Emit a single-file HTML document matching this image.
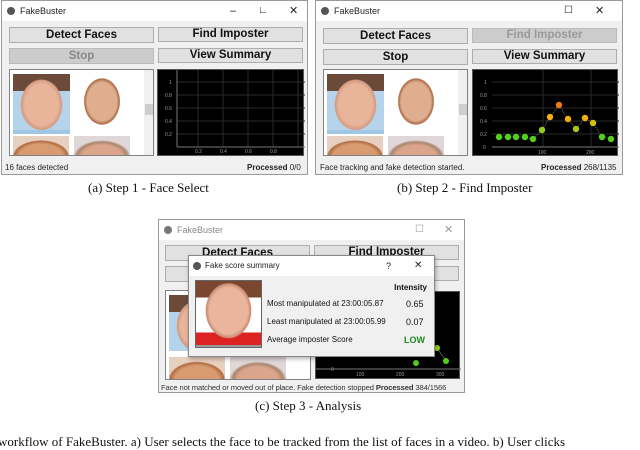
<!DOCTYPE html>
<html><head><meta charset="utf-8">
<style>
*{margin:0;padding:0;box-sizing:border-box}
body{width:640px;height:437px;background:#fff;position:relative;overflow:hidden;font-family:"Liberation Sans",sans-serif}
.a{position:absolute}
.win{position:absolute;background:#f0f0f0;border:1px solid #9a9a9a}
.tb{position:absolute;left:0;right:0;top:0;height:20px;background:#fff;font-size:9px;color:#222;line-height:20px;padding-left:18px}
.btn{position:absolute;background:#e1e1e1;border:1px solid #adadad;font-weight:bold;font-size:11.5px;text-align:center;color:#111}
.list{position:absolute;background:#fff;border:1px solid #828282;overflow:hidden}
.chart{position:absolute;background:#000;border:1px solid #555}
.st{position:absolute;font-size:8px;color:#222;white-space:nowrap}
.cap{position:absolute;font-family:"Liberation Serif",serif;font-size:13px;color:#111;white-space:nowrap}
.f1{background:radial-gradient(ellipse 42% 52% at 50% 55%,#e8b49a 70%,#d49a80 85%,transparent 88%),linear-gradient(#6b4a3a 0 30%,#b5d3ea 30%);}
.f2{background:radial-gradient(ellipse 38% 50% at 50% 50%,#dfae8e 70%,#a86a45 82%,#fff 86%);}
.f3{background:radial-gradient(ellipse 60% 90% at 50% 95%,#d89b70 65%,#b06a40 80%,#e8d0c0 85%);}
.f4{background:radial-gradient(ellipse 60% 90% at 50% 95%,#dba58c 60%,#a8866e 75%,#e0d8d8 85%);}
.sb{position:absolute;width:10px;background:#f0f0f0}
</style></head><body>

<div class="win" style="left:1px;top:0;width:307px;height:175px">
 <div class="tb">FakeBuster<span class="a" style="left:5px;top:6px;width:8px;height:8px;border-radius:50%;background:#555"></span>
  <span class="a" style="left:228px;top:0;font-size:11px">–</span><span class="a" style="left:256px;top:0;font-size:10px">∟</span><span class="a" style="left:287px;top:0;font-size:11px">✕</span></div>
 <div class="btn" style="left:7px;top:26px;width:145px;height:16px;line-height:14px">Detect Faces</div>
 <div class="btn" style="left:156px;top:26px;width:145px;height:15px;line-height:13px">Find Imposter</div>
 <div class="btn" style="left:7px;top:47px;width:145px;height:16px;line-height:14px;background:#cccccc;color:#888;border-color:#bbb">Stop</div>
 <div class="btn" style="left:156px;top:47px;width:145px;height:15px;line-height:13px">View Summary</div>
 <div class="list" style="left:7px;top:68px;width:145px;height:87px">
  <div class="a f1" style="left:3px;top:4px;width:57px;height:56px"></div>
  <div class="a" style="left:3px;top:60px;width:57px;height:4px;background:#9fc6e3"></div>
  <div class="a f2" style="left:64px;top:4px;width:56px;height:55px"></div>
  <div class="a f3" style="left:3px;top:66px;width:56px;height:22px"></div>
  <div class="a f4" style="left:64px;top:66px;width:56px;height:22px"></div>
  <div class="sb" style="left:134px;top:0;height:87px"><div class="a" style="left:1px;top:34px;width:9px;height:11px;background:#cdcdcd"></div></div>
 </div>
 <div class="chart" style="left:155px;top:68px;width:147px;height:87px">
  <svg width="147" height="87" style="position:absolute;left:0;top:0">
   <g stroke="#2a2a2a" stroke-width="1">
    <line x1="19" y1="12" x2="147" y2="12"/><line x1="19" y1="25" x2="147" y2="25"/><line x1="19" y1="38" x2="147" y2="38"/><line x1="19" y1="51" x2="147" y2="51"/><line x1="19" y1="64" x2="147" y2="64"/>
    <line x1="40" y1="0" x2="40" y2="77"/><line x1="65" y1="0" x2="65" y2="77"/><line x1="90" y1="0" x2="90" y2="77"/><line x1="115" y1="0" x2="115" y2="77"/><line x1="140" y1="0" x2="140" y2="77"/>
   </g>
   <line x1="19" y1="77" x2="147" y2="77" stroke="#777"/><line x1="19" y1="0" x2="19" y2="77" stroke="#777"/>
   <g fill="#999" font-size="5" font-family="Liberation Sans">
    <text x="11" y="14">1</text><text x="7" y="27">0.8</text><text x="7" y="40">0.6</text><text x="7" y="53">0.4</text><text x="7" y="66">0.2</text>
    <text x="37" y="83">0.2</text><text x="62" y="83">0.4</text><text x="87" y="83">0.6</text><text x="112" y="83">0.8</text>
   </g>
  </svg>
 </div>
 <div class="st" style="left:3px;top:162px">16 faces detected</div>
 <div class="st" style="left:245px;top:162px"><b>Processed</b> 0/0</div>
</div>
<div class="cap" style="left:88px;top:180px">(a) Step 1 - Face Select</div>

<div class="win" style="left:315px;top:0;width:308px;height:175px">
 <div class="tb">FakeBuster<span class="a" style="left:5px;top:6px;width:8px;height:8px;border-radius:50%;background:#555"></span>
  <span class="a" style="left:248px;top:0;font-size:10px">☐</span><span class="a" style="left:279px;top:0;font-size:11px">✕</span></div>
 <div class="btn" style="left:7px;top:27px;width:145px;height:16px;line-height:14px">Detect Faces</div>
 <div class="btn" style="left:156px;top:27px;width:145px;height:15px;line-height:13px;background:#cccccc;color:#999;border-color:#bbb">Find Imposter</div>
 <div class="btn" style="left:7px;top:48px;width:145px;height:16px;line-height:14px">Stop</div>
 <div class="btn" style="left:156px;top:48px;width:145px;height:15px;line-height:13px">View Summary</div>
 <div class="list" style="left:7px;top:68px;width:145px;height:87px">
  <div class="a f1" style="left:3px;top:4px;width:57px;height:56px"></div>
  <div class="a" style="left:3px;top:60px;width:57px;height:4px;background:#9fc6e3"></div>
  <div class="a f2" style="left:64px;top:4px;width:56px;height:55px"></div>
  <div class="a f3" style="left:3px;top:66px;width:56px;height:22px"></div>
  <div class="a f4" style="left:64px;top:66px;width:56px;height:22px"></div>
  <div class="sb" style="left:134px;top:0;height:87px"><div class="a" style="left:1px;top:34px;width:9px;height:11px;background:#cdcdcd"></div></div>
 </div>
 <div class="chart" style="left:156px;top:68px;width:146px;height:87px">
  <svg width="146" height="87" style="position:absolute;left:0;top:0">
   <g stroke="#2a2a2a"><line x1="19" y1="12" x2="146" y2="12"/><line x1="19" y1="25" x2="146" y2="25"/><line x1="19" y1="38" x2="146" y2="38"/><line x1="19" y1="51" x2="146" y2="51"/><line x1="19" y1="64" x2="146" y2="64"/><line x1="70" y1="0" x2="70" y2="77"/><line x1="118" y1="0" x2="118" y2="77"/></g>
   <line x1="19" y1="77" x2="146" y2="77" stroke="#777"/>
   <g fill="#999" font-size="5"><text x="11" y="14">1</text><text x="7" y="27">0.8</text><text x="7" y="40">0.6</text><text x="7" y="53">0.4</text><text x="7" y="66">0.2</text><text x="10" y="79">0</text><text x="65" y="84">100</text><text x="113" y="84">200</text></g>
   <polyline fill="none" stroke="#888" stroke-width="0.6" stroke-dasharray="1.5,1" points="26,67 35,67 43,67 52,67 60,69 69,60 77,47 86,35 95,49 103,59 112,48 120,53 129,67 138,69"/>
   <g>
    <circle cx="26" cy="67" r="3.2" fill="#55d01a"/><circle cx="35" cy="67" r="3.2" fill="#55d01a"/><circle cx="43" cy="67" r="3.2" fill="#55d01a"/><circle cx="52" cy="67" r="3.2" fill="#55d01a"/><circle cx="60" cy="69" r="3.2" fill="#55d01a"/>
    <circle cx="69" cy="60" r="3.2" fill="#8fd01a"/><circle cx="77" cy="47" r="3.2" fill="#f0b010"/><circle cx="86" cy="35" r="3.2" fill="#f07810"/><circle cx="95" cy="49" r="3.2" fill="#f0b010"/><circle cx="103" cy="59" r="3.2" fill="#a8c818"/><circle cx="112" cy="48" r="3.2" fill="#f0b010"/><circle cx="120" cy="53" r="3.2" fill="#d0c010"/><circle cx="129" cy="67" r="3.2" fill="#55d01a"/><circle cx="138" cy="69" r="3.2" fill="#55d01a"/>
   </g>
  </svg>
 </div>
 <div class="st" style="left:4px;top:162px">Face tracking and fake detection started.</div>
 <div class="st" style="left:225px;top:162px"><b>Processed</b> 268/1135</div>
</div>
<div class="cap" style="left:397px;top:180px">(b) Step 2 - Find Imposter</div>

<div class="win" style="left:158px;top:219px;width:307px;height:174px">
 <div class="tb" style="color:#888">FakeBuster<span class="a" style="left:5px;top:6px;width:8px;height:8px;border-radius:50%;background:#777"></span>
  <span class="a" style="left:256px;top:0;font-size:10px;color:#999">☐</span><span class="a" style="left:285px;top:0;font-size:11px;color:#999">✕</span></div>
 <div class="btn" style="left:6px;top:25px;width:145px;height:16px;line-height:14px">Detect Faces</div>
 <div class="btn" style="left:155px;top:25px;width:145px;height:15px;line-height:13px">Find Imposter</div>
 <div class="btn" style="left:6px;top:46px;width:145px;height:16px"></div>
 <div class="btn" style="left:155px;top:46px;width:145px;height:15px"></div>
 <div class="list" style="left:6px;top:70px;width:146px;height:90px">
  <div class="a f1" style="left:3px;top:4px;width:57px;height:56px"></div>
  <div class="a f2" style="left:64px;top:4px;width:56px;height:55px"></div>
  <div class="a f3" style="left:3px;top:66px;width:56px;height:24px"></div>
  <div class="a f4" style="left:64px;top:66px;width:56px;height:24px"></div>
 </div>
 <div class="chart" style="left:156px;top:71px;width:145px;height:88px">
  <svg width="145" height="88" style="position:absolute;left:0;top:0">
   <line x1="0" y1="77" x2="145" y2="77" stroke="#777"/>
   <g fill="#999" font-size="5"><text x="15" y="79">0</text><text x="40" y="84">100</text><text x="80" y="84">200</text><text x="120" y="84">300</text></g>
   <polyline fill="none" stroke="#888" stroke-width="0.6" points="113,58 121,56 130,69"/>
   <circle cx="113" cy="58" r="3" fill="#8fd01a"/><circle cx="121" cy="56" r="3" fill="#8fd01a"/><circle cx="130" cy="69" r="3" fill="#55d01a"/><circle cx="100" cy="71" r="3" fill="#55d01a"/>
  </svg>
 </div>
 <div class="st" style="left:2px;top:163px;color:#333;font-size:7.6px;letter-spacing:-0.1px">Face not matched or moved out of place. Fake detection stopped <b>Processed</b> 384/1566</div>
</div>
<div class="a" style="left:188px;top:255px;width:247px;height:102px;background:#f0f0f0;border:1px solid #888;box-shadow:1px 2px 4px rgba(0,0,0,.3)">
 <div class="a" style="left:0;top:0;width:245px;height:20px;background:#fff;font-size:8px;line-height:20px;padding-left:16px;color:#222">Fake score summary
  <span class="a" style="left:4px;top:6px;width:8px;height:8px;border-radius:50%;background:#555"></span>
  <span class="a" style="left:197px;top:0;font-size:9px">?</span><span class="a" style="left:225px;top:0;font-size:10px">✕</span></div>
 <div class="a" style="left:6px;top:24px;width:67px;height:68px;border:1px solid #666;background:radial-gradient(ellipse 42% 50% at 50% 45%,#eab59c 70%,#c88a70 82%,transparent 85%),linear-gradient(#7a4630 0 25%,#fff 25% 78%,#d22 78% 97%,#999 97%)"></div>
 <div class="a" style="left:78px;top:22px;width:162px;font-size:8px;color:#111">
  <div class="a" style="left:90px;top:5px;width:70px;text-align:right;font-weight:bold">Intensity</div>
  <div class="a" style="left:0;top:21px;white-space:nowrap">Most manipulated at 23:00:05.87</div><div class="a" style="left:139px;top:21px;font-size:9px">0.65</div>
  <div class="a" style="left:0;top:39px;white-space:nowrap">Least manipulated at 23:00:05.99</div><div class="a" style="left:139px;top:39px;font-size:9px">0.07</div>
  <div class="a" style="left:0;top:57px;white-space:nowrap">Average imposter Score</div><div class="a" style="left:137px;top:57px;font-size:9px;font-weight:bold;color:#1f8a1f">LOW</div>
 </div>
</div>
<div class="cap" style="left:255px;top:398px">(c) Step 3 - Analysis</div>
<div class="cap" style="left:-2px;top:434px;font-size:13px">workflow of FakeBuster. a) User selects the face to be tracked from the list of faces in a video. b) User clicks</div>
</body></html>
